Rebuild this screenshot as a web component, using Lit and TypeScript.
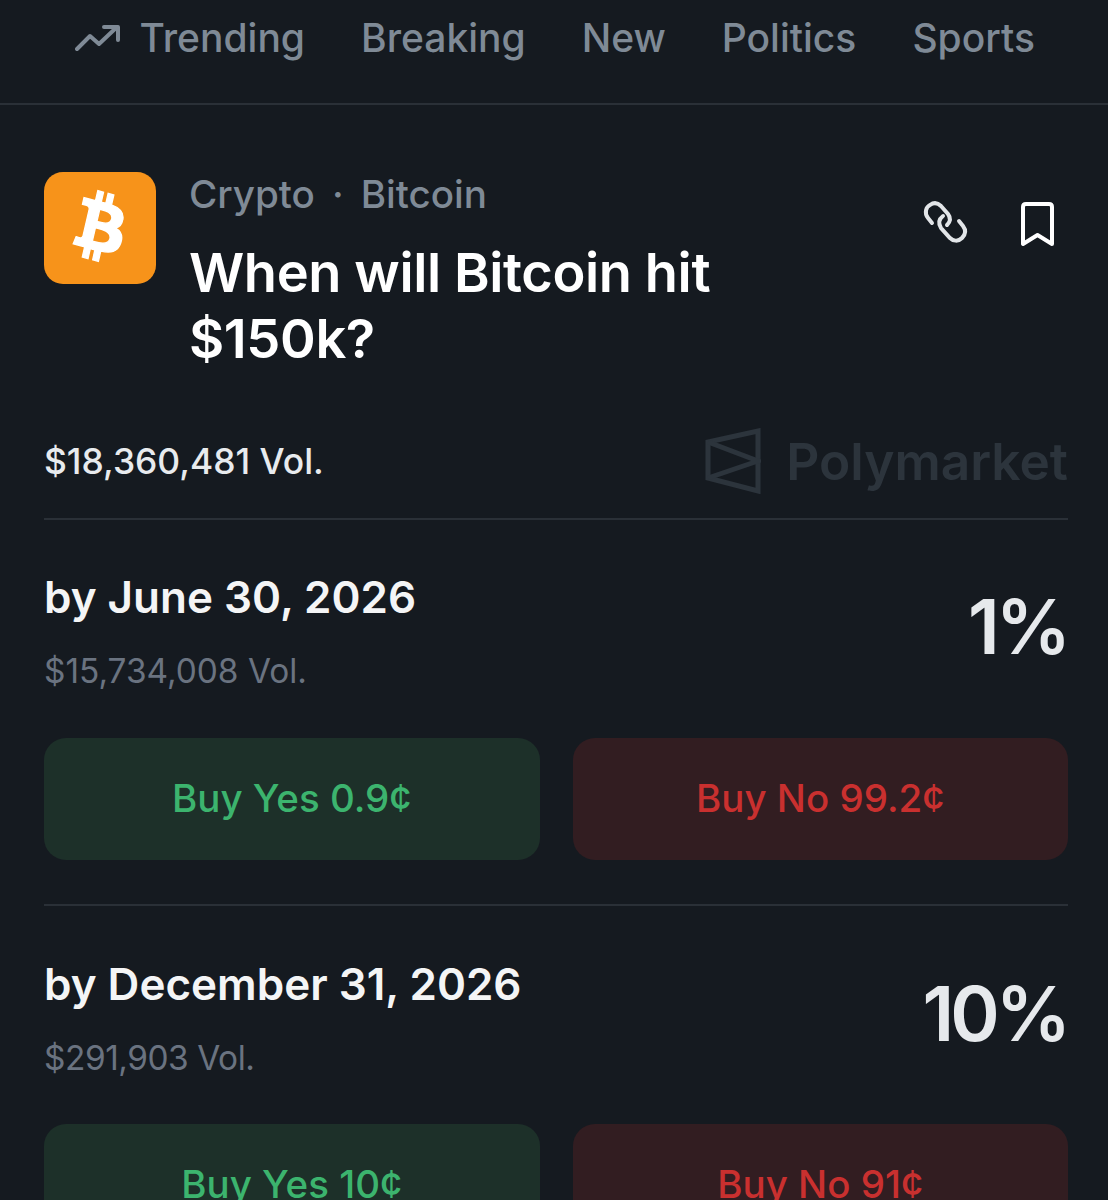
import { LitElement, html, css, svg } from "lit";
import { customElement } from "lit/decorators.js";
import { classMap } from "lit/directives/class-map.js";

const markets = [
  { date: "by June 30, 2026", vol: "$15,734,008 Vol.", pct: "1%", yes: "Buy Yes 0.9¢", no: "Buy No 99.2¢", tight: false },
  { date: "by December 31, 2026", vol: "$291,903 Vol.", pct: "10%", yes: "Buy Yes 10¢", no: "Buy No 91¢", tight: true },
];

@customElement("app-root")
export class AppRoot extends LitElement {
  static styles = css`
    :host { display: block; height: 1200px; overflow: hidden; background: #151a20; font-family: Inter, "Liberation Sans", sans-serif; color: #fff; }
    * { box-sizing: border-box; }
    nav { height: 105px; border-bottom: 2px solid #2a3037; display: flex; align-items: flex-start; padding: 14px 0 0 75px; gap: 56px; font-size: 39px; line-height: 48px; font-weight: 500; color: #7f8a96; white-space: nowrap; overflow: hidden; }
    .tab { display: flex; align-items: center; gap: 18.5px; }
    .tab svg { width: 46px; height: 30px; display: block; }
    main { padding: 67px 40px 0 44px; }
    .head { display: flex; align-items: flex-start; }
    .logo { width: 112px; height: 112px; border-radius: 19px; background: #f7931a; flex: none; }
    .logo svg { width: 112px; height: 112px; display: block; }
    .titles { margin-left: 33px; flex: 1; }
    .crumbs { display: flex; gap: 17px; font-size: 38.6px; line-height: 44px; color: #7f8a96; font-weight: 500; }
    h1 { margin: 23px 0 0; font-size: 54.2px; line-height: 66px; font-weight: 600; width: 560px; color: #fff; letter-spacing: -0.4px; }
    .actions { display: flex; gap: 43px; margin-top: 20px; margin-right: 10px; }
    .actions svg { display: block; height: 60px; }
    .link { width: 60px; }
    .mark { width: 40px; }
    .volrow { margin-top: 58px; padding-bottom: 25px; display: flex; align-items: center; justify-content: space-between; border-bottom: 2px solid #2a3037; height: 91px; }
    .vol { font-size: 35.4px; font-weight: 500; color: #e8ebee; }
    .brand { display: flex; align-items: center; gap: 25px; font-size: 51.4px; font-weight: 600; color: #2c343c; }
    .brand svg { width: 56px; height: 66px; display: block; }
    .market { padding-top: 50px; border-bottom: 2px solid #2a3037; height: 386px; }
    .market:last-child { border: 0; padding-top: 51px; }
    .mtop { display: flex; justify-content: space-between; align-items: flex-start; }
    .date { font-size: 44px; line-height: 54px; font-weight: 600; color: #f4f5f6; }
    .mvol { margin-top: 27px; font-size: 33.4px; line-height: 40px; color: #6a7380; }
    .tight { letter-spacing: -0.45px; }
    .pct { font-size: 75px; line-height: 90px; margin-top: 12px; font-weight: 600; color: #e6e9ec; letter-spacing: -4px; margin-right: 1px; }
    .btns { margin-top: 47px; display: grid; grid-template-columns: 1fr 1fr; gap: 33px; }
    .market:last-child .btns { margin-top: 46px; }
    .btn { height: 122px; border-radius: 22px; display: flex; align-items: center; justify-content: center; font-size: 38.5px; font-weight: 500; padding-bottom: 3px; }
    .yes { background: #1d3029; color: #3cb46e; }
    .no { background: #321d21; color: #c9302f; }
  `;

  render() {
    return html`
      <nav>
        <div class="tab">
          <svg viewBox="0 0 46 30" fill="none" stroke="#7f8a96" stroke-width="4" stroke-linecap="round" stroke-linejoin="round">
            <path d="M2 26 L15 13 L24 21 L42 4"/><path d="M29 4 H43 V17"/>
          </svg>
          Trending
        </div>
        <div>Breaking</div><div>New</div><div>Politics</div><div>Sports</div>
      </nav>
      <main>
        <div class="head">
          <div class="logo">
            <svg viewBox="0 0 112 112" fill="#fff" stroke="#fff" stroke-width="0.3">
              <path transform="translate(53 55) scale(4.33 4.65) translate(-11.3 -12)" fill-rule="evenodd" d="M17.288 10.291c.24-1.59-.974-2.45-2.64-3.03l.54-2.153-1.315-.33-.525 2.107c-.345-.087-.705-.167-1.064-.25l.526-2.127-1.32-.33-.54 2.165c-.285-.067-.565-.132-.84-.2l-1.815-.45-.35 1.407s.975.225.955.236c.535.136.63.486.615.766l-1.477 5.92c-.075.166-.24.406-.614.314.015.02-.96-.24-.96-.24l-.66 1.51 1.71.426.93.242-.54 2.19 1.32.327.54-2.17c.36.1.705.19 1.05.273l-.51 2.154 1.32.33.545-2.19c2.24.427 3.93.257 4.64-1.774.57-1.637-.03-2.58-1.217-3.196.854-.193 1.5-.76 1.68-1.93h.01zm-3.01 4.22c-.404 1.64-3.157.75-4.05.53l.72-2.9c.896.23 3.757.67 3.33 2.37zm.41-4.24c-.37 1.49-2.662.735-3.405.55l.654-2.64c.744.18 3.137.524 2.75 2.084v.006z"/>
            </svg>
          </div>
          <div class="titles">
            <div class="crumbs"><span>Crypto</span><span>·</span><span>Bitcoin</span></div>
            <h1>When will Bitcoin hit $150k?</h1>
          </div>
          <div class="actions">
            <svg class="link" viewBox="0 0 60 60" fill="none" stroke="#e2e5e8" stroke-width="4" stroke-linecap="round">
              <path d="M17 31 L13 26 C9 21 11 15 15 13 C19 10 23 11 26 14 L33 22 C36 26 35 30 32 33"/>
              <path d="M28 24 C24 27 23 31 26 36 L35 46 C38 49 43 50 47 46 C51 42 51 38 48 34 L44 29"/>
            </svg>
            <svg class="mark" viewBox="0 0 40 60" fill="none" stroke="#fff" stroke-width="4" stroke-linejoin="round">
              <path d="M5 15 Q5 12 8 12 H31 Q34 12 34 15 V52 L19.5 43 L5 52 Z"/>
            </svg>
          </div>
        </div>
        <div class="volrow">
          <span class="vol">$18,360,481 Vol.</span>
          <span class="brand">
            ${svg`<svg viewBox="0 0 56 66" fill="none" stroke="#2c343c" stroke-width="5" stroke-linejoin="miter"><path d="M53 3 V63 L3 50 V14 Z"/><path d="M3 14 L53 33 L3 50"/></svg>`}
            Polymarket
          </span>
        </div>
        ${markets.map((m) => html`
          <section class="market">
            <div class="mtop">
              <div>
                <div class="date">${m.date}</div>
                <div class=${classMap({ mvol: true, tight: m.tight })}>${m.vol}</div>
              </div>
              <div class="pct">${m.pct}</div>
            </div>
            <div class="btns">
              <div class="btn yes">${m.yes}</div>
              <div class="btn no">${m.no}</div>
            </div>
          </section>
        `)}
      </main>
    `;
  }
}
